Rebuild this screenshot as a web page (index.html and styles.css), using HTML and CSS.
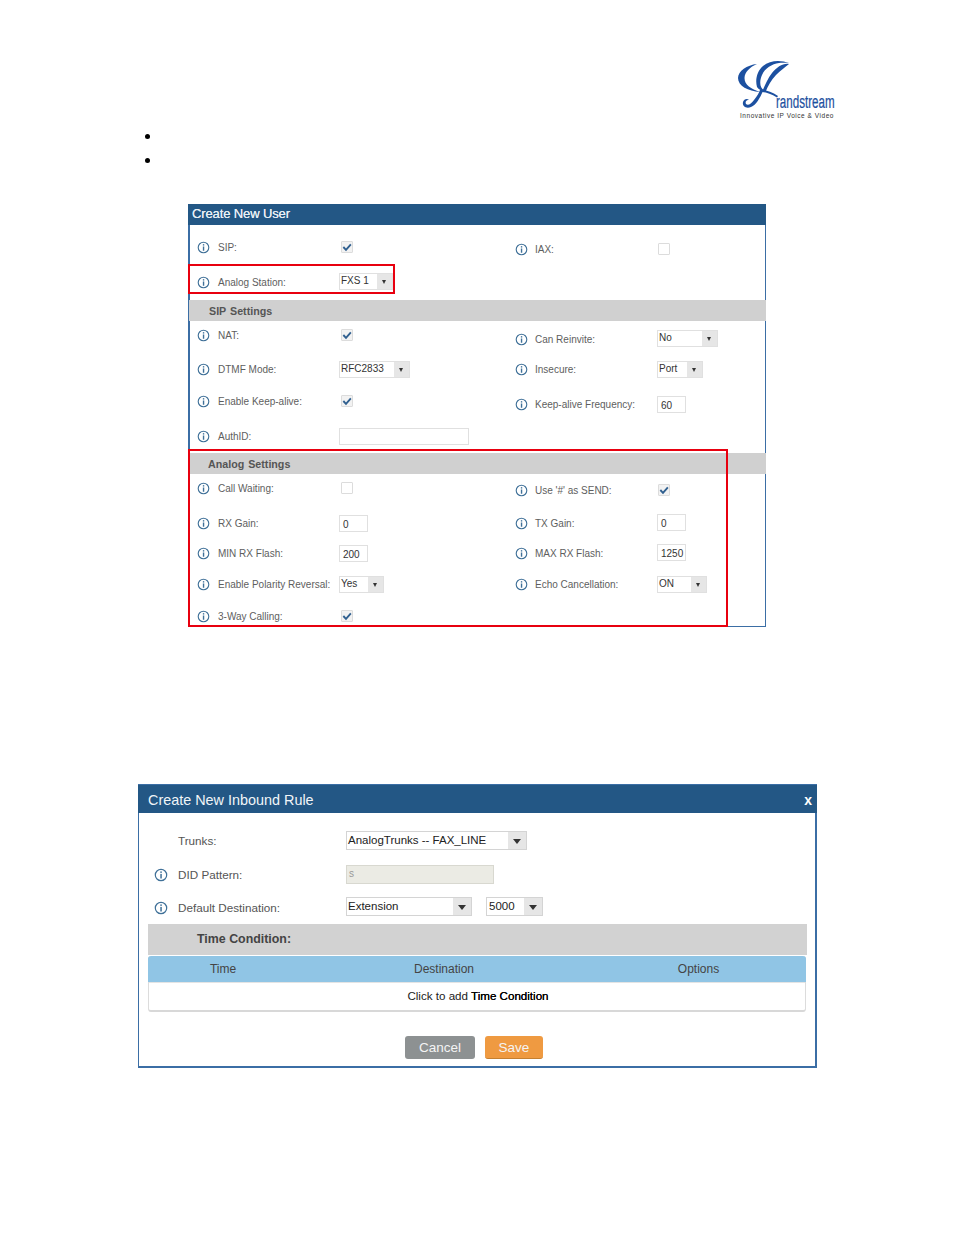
FILE: index.html
```html
<!DOCTYPE html>
<html lang="en">
<head>
<meta charset="utf-8">
<title>Create New User</title>
<link rel="stylesheet" href="styles.css">
</head>
<body>
<svg class="defs" width="0" height="0" aria-hidden="true">
  <symbol id="info" viewBox="0 0 14 14">
    <circle cx="7" cy="7" r="5.7" fill="none" stroke="#3f7098" stroke-width="1.2"/>
    <rect x="6.3" y="5.9" width="1.5" height="4.6" fill="#3f7098"/>
    <rect x="6.3" y="3.4" width="1.5" height="1.5" fill="#3f7098"/>
  </symbol>
  <symbol id="tick" viewBox="0 0 12 12">
    <path d="M1.6 6 4.8 9.4 10.6 2.8" fill="none" stroke="#2f5f8f" stroke-width="2.2"/>
  </symbol>
</svg>
<div class="page">
  <header class="top">
    <svg class="logo" viewBox="0 0 100 60" role="img" aria-label="Grandstream">
      <path d="M21 4C11 5 2 11 2 18 2 26 12 31 24 32 15 29 8.500 25 8.500 18 8.500 12 14 7 21 4Z" fill="#1c50a0"/>
      <path d="M53 3C45 0 34 0 27 6 21 11 19 20 21 27 23 30 26 31 28 30 24 28 23 22 26 15 29 8 36 4 43 3 47 2.500 50 3 53 3Z" fill="#1c50a0"/>
      <path d="M53 4C47 3 41 7 36 13 32 18 29 25 26 32L29.500 32C32 26 35 20 40 15 44 11 49 7 53 4Z" fill="#1c50a0"/>
      <path d="M27 31C24 38 20 45 15 47 10 49 6 46 7 42 8 39 11 38 13 40 10 40 9 42 10 44 12 46 15 44 18 40 21 36 23 33 24 30Z" fill="#1c50a0"/>
      <path d="M24 30C30 30 36 32 42 36L41 37.500C35 34 30 32 24 32Z" fill="#1c50a0"/>
      <text class="logo-name" transform="translate(40 48) scale(.61 1)">randstream</text>
      <text class="logo-tag" x="4" y="58">Innovative IP Voice &amp; Video</text>
    </svg>
  </header>
  <ul class="bullets">
    <li>&nbsp;</li>
    <li>&nbsp;</li>
  </ul>

  <section class="panel user">
    <h2 class="user-title">Create New User</h2>
    <div class="row r1">
      <div class="cell"><svg class="i"><use href="#info"/></svg><span class="lb">SIP:</span><span class="box on"><svg><use href="#tick"/></svg></span></div>
      <div class="cell right low2"><svg class="i"><use href="#info"/></svg><span class="lb">IAX:</span><span class="box"></span></div>
    </div>
    <div class="row r2">
      <div class="cell"><svg class="i"><use href="#info"/></svg><span class="lb">Analog Station:</span><span class="sel w54 up1"><span>FXS 1</span><b></b></span></div>
    </div>
    <div class="bar">SIP Settings</div>
    <div class="row r3">
      <div class="cell"><svg class="i"><use href="#info"/></svg><span class="lb">NAT:</span><span class="box on"><svg><use href="#tick"/></svg></span></div>
      <div class="cell right low4"><svg class="i"><use href="#info"/></svg><span class="lb">Can Reinvite:</span><span class="sel w61 up1"><span>No</span><b></b></span></div>
    </div>
    <div class="row r4">
      <div class="cell"><svg class="i"><use href="#info"/></svg><span class="lb">DTMF Mode:</span><span class="sel w71"><span>RFC2833</span><b></b></span></div>
      <div class="cell right"><svg class="i"><use href="#info"/></svg><span class="lb">Insecure:</span><span class="sel w46"><span>Port</span><b></b></span></div>
    </div>
    <div class="row r5">
      <div class="cell"><svg class="i"><use href="#info"/></svg><span class="lb">Enable Keep-alive:</span><span class="box on"><svg><use href="#tick"/></svg></span></div>
      <div class="cell right low6"><svg class="i"><use href="#info"/></svg><span class="lb">Keep-alive Frequency:</span><span class="inp w29">60</span></div>
    </div>
    <div class="row r6">
      <div class="cell low6"><svg class="i"><use href="#info"/></svg><span class="lb">AuthID:</span><span class="inp w130"></span></div>
    </div>
    <div class="bar alt">Analog Settings</div>
    <div class="row r7">
      <div class="cell"><svg class="i"><use href="#info"/></svg><span class="lb">Call Waiting:</span><span class="box"></span></div>
      <div class="cell right low2"><svg class="i"><use href="#info"/></svg><span class="lb">Use '#' as SEND:</span><span class="box on"><svg><use href="#tick"/></svg></span></div>
    </div>
    <div class="row r8">
      <div class="cell"><svg class="i"><use href="#info"/></svg><span class="lb">RX Gain:</span><span class="inp w29">0</span></div>
      <div class="cell right"><svg class="i"><use href="#info"/></svg><span class="lb">TX Gain:</span><span class="inp w29 up1">0</span></div>
    </div>
    <div class="row r9">
      <div class="cell"><svg class="i"><use href="#info"/></svg><span class="lb">MIN RX Flash:</span><span class="inp w29">200</span></div>
      <div class="cell right"><svg class="i"><use href="#info"/></svg><span class="lb">MAX RX Flash:</span><span class="inp w29 up1">1250</span></div>
    </div>
    <div class="row r10">
      <div class="cell"><svg class="i"><use href="#info"/></svg><span class="lb">Enable Polarity Reversal:</span><span class="sel w45"><span>Yes</span><b></b></span></div>
      <div class="cell right"><svg class="i"><use href="#info"/></svg><span class="lb">Echo Cancellation:</span><span class="sel w50"><span>ON</span><b></b></span></div>
    </div>
    <div class="row r11">
      <div class="cell"><svg class="i"><use href="#info"/></svg><span class="lb">3-Way Calling:</span><span class="box on"><svg><use href="#tick"/></svg></span></div>
    </div>
    <div class="mark mark-a"></div>
    <div class="mark mark-b"></div>
  </section>

  <section class="panel rule">
    <h2 class="rule-title"><span>Create New Inbound Rule</span><span class="close">x</span></h2>
    <div class="frow f1">
      <span class="i2"></span><span class="flb">Trunks:</span>
      <span class="fsel w181"><span>AnalogTrunks -- FAX_LINE</span><b></b></span>
    </div>
    <div class="frow f2">
      <svg class="i2"><use href="#info"/></svg><span class="flb">DID Pattern:</span>
      <span class="fdis">s</span>
    </div>
    <div class="frow f3">
      <svg class="i2"><use href="#info"/></svg><span class="flb">Default Destination:</span>
      <span class="fsel w126"><span>Extension</span><b></b></span>
      <span class="fsel w57"><span>5000</span><b></b></span>
    </div>
    <div class="tc">Time Condition:</div>
    <div class="table">
      <div class="thead"><span>Time</span><span>Destination</span><span>Options</span></div>
      <div class="tbody">Click to add <strong>Time Condition</strong></div>
    </div>
    <div class="actions">
      <span class="btn cancel">Cancel</span>
      <span class="btn save">Save</span>
    </div>
  </section>
</div>
</body>
</html>
```

FILE: styles.css
```css
* { box-sizing: border-box; }
html, body { margin: 0; padding: 0; background: #fff; }
body { font-family: "Liberation Sans", Arial, sans-serif; color: #555; }
.defs { position: absolute; }
.page { width: 954px; height: 1235px; overflow: hidden; }

.top { display: flex; justify-content: flex-end; padding: 60px 118px 0 0; }
.logo { width: 100px; height: 60px; display: block; overflow: visible; }
.logo-name { font: 400 19px "Liberation Sans", Arial, sans-serif; fill: #1c50a0; stroke: #1c50a0; stroke-width: .25px; }
.logo-tag { font: 400 6.5px "Liberation Sans", Arial, sans-serif; fill: #333; letter-spacing: .53px; }

.bullets { margin: 4px 0 0; padding: 0 0 0 161px; list-style: disc; color: #000; font-size: 16px; line-height: 24px; height: 48px; }
.bullets li { height: 24px; }

.panel { background: #fff; }
.user { position: relative; margin: 32px 0 0 188px; width: 578px; height: 423px; border: solid #3b6ea5; border-width: 0 1px 1px 2px; }
.user-title { margin: 0 -1px 0 -2px; height: 21px; background: #235785; color: #e8eff5; font-size: 13px; font-weight: 400; line-height: 20px; padding-left: 4px; letter-spacing: -.12px; text-shadow: 0 0 .5px #e8eff5; }

.row { display: grid; grid-template-columns: 318px 1fr; padding-left: 7px; align-items: center; }
.r1 { height: 44px; }
.r2 { height: 31px; margin-top: -2px; margin-bottom: 2px; }
.r3 { height: 28px; }
.r4 { height: 40px; }
.r5 { height: 24px; }
.r6 { height: 40px; }
.r7 { height: 28px; }
.r8 { height: 42px; }
.r9 { height: 20px; margin-top: -1px; }
.r10 { height: 42px; }
.r11 { height: 22px; }
.cell { display: flex; align-items: center; height: 100%; min-width: 0; }
.i { width: 13px; height: 13px; flex: none; margin-right: 8px; }
.right .i { margin-right: 7px; }
.lb { width: 121px; flex: none; font-size: 10px; white-space: nowrap; color: #5e5e5e; }
.right .lb { width: 122px; }
.low2 { padding-top: 4px; }
.low4 { padding-top: 8px; }
.low6 { padding-top: 7px; }
.up1 { margin-top: -2px; }

.box { width: 12px; height: 12px; margin-left: 2px; border: 1px solid #dcdcdc; border-radius: 1px; background: #fff; display: block; flex: none; }
.right .box { margin-left: 1px; }
.box.on { background: #f2f2f2; }
.box svg { width: 10px; height: 10px; display: block; }

.sel, .inp { display: flex; height: 17px; border: 1px solid #e0e0e0; background: #fff; font-size: 10px; line-height: 13px; color: #333; flex: none; }
.sel span { flex: 1; padding: 0 0 0 1px; }
.sel b { width: 15px; background: #e6e6e6; position: relative; flex: none; }
.sel b::after { content: ""; position: absolute; left: 5px; top: 6px; border: 2.5px solid transparent; border-top: 4px solid #333; border-bottom: 0; }
.inp { padding: 2px 0 0 3px; }
.w29 { width: 29px; }
.w45 { width: 45px; }
.w46 { width: 46px; }
.w50 { width: 50px; }
.w54 { width: 54px; }
.w61 { width: 61px; }
.w71 { width: 71px; }
.w130 { width: 130px; }

.bar { margin: 0 -1px 0 -1px; height: 21px; background: #d0d0d0; font-size: 10.7px; font-weight: 700; line-height: 22px; color: #555; padding-left: 20px; word-spacing: 1px; }
.bar.alt { padding-left: 19px; }

.mark { position: absolute; border: 2px solid #e8000f; pointer-events: none; }
.mark-a { left: -2px; top: 60px; width: 207px; height: 30px; }
.mark-b { left: -2px; top: 245px; width: 540px; height: 178px; }

.rule { margin: 157px 0 0 138px; width: 679px; height: 284px; border: solid #3b6ea5; border-width: 1px 2px 2px 1px; }
.rule-title { display: flex; justify-content: space-between; align-items: center; margin: 0 -2px 0 -1px; height: 28px; background: #235785; color: #f1f5f8; font-size: 14.4px; font-weight: 400; padding: 2px 5px 0 10px; }
.close { font-size: 14px; font-weight: 700; color: #fff; }

.frow { display: flex; align-items: center; padding-left: 15px; height: 33px; }
.f1 { margin-top: 10px; height: 34px; }
.f2 { height: 34px; }
.f3 { height: 30px; }
.i2 { width: 14px; height: 14px; flex: none; margin-right: 10px; }
.f2 .i2 { margin-top: 2px; }
.f3 .i2 { margin-top: 4px; }
.flb { width: 168px; flex: none; font-size: 11.7px; color: #555; }
.f3 .flb { padding-top: 2px; }
.fsel { display: flex; height: 19px; border: 1px solid #d4d4d4; background: #fff; font-size: 11.5px; color: #222; line-height: 16px; }
.fsel span { flex: 1; padding-left: 1px; }
.fsel b { width: 18px; background: #e6e6e6; position: relative; flex: none; }
.fsel b::after { content: ""; position: absolute; left: 5px; top: 7px; border: 4px solid transparent; border-top: 5px solid #333; border-bottom: 0; }
.fdis { width: 148px; height: 19px; background: #ebebe4; border: 1px solid #d8d8d0; color: #999; font-size: 10px; padding: 2px 0 0 2px; }
.w181 { width: 181px; }
.w126 { width: 126px; }
.w57 { width: 57px; margin-left: 14px; }
.w57 span { padding-left: 2px; }

.tc { margin: 3px 0 0 9px; width: 659px; height: 31px; background: #d2d2d2; color: #444; font-size: 12.4px; font-weight: 700; line-height: 31px; padding-left: 49px; }
.table { margin: 1px 0 0 9px; width: 658px; height: 56px; border: 1px solid #dcdcdc; border-top: 0; border-bottom: 2px solid #d8d8d8; border-radius: 3px; }
.thead { display: grid; grid-template-columns: 150px 292px 217px; height: 26px; margin: 0 -1px; background: #90c5e5; border-radius: 3px 3px 0 0; font-size: 12px; color: #444; line-height: 26px; text-align: center; }
.tbody { height: 28px; border-top: 1px solid #e4e4e4; text-align: center; font-size: 11.6px; line-height: 26px; color: #222; padding-left: 2px; }
.tbody strong { font-weight: 400; color: #000; text-shadow: 0 0 .4px #000; }

.actions { display: flex; gap: 10px; margin: 24px 0 0 266px; }
.btn { display: block; height: 23px; border-radius: 3px; color: #f4f4f4; font-size: 13.5px; line-height: 23px; text-align: center; }
.cancel { width: 70px; background: #8d9192; border: 0; }
.save { width: 58px; background: #ef9a41; border-bottom: 1px solid #c47f30; }
```
